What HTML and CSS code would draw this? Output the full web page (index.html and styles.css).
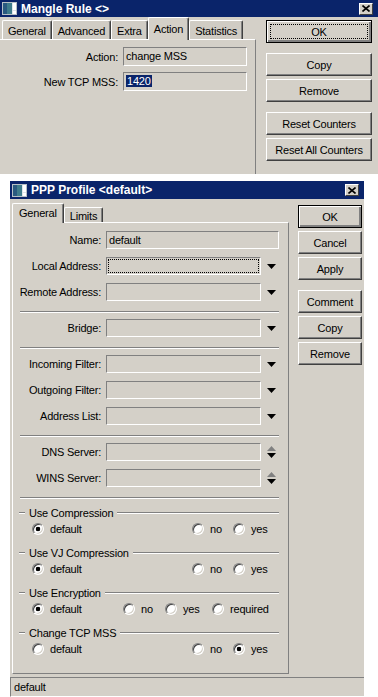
FILE: index.html
```html
<!DOCTYPE html>
<html lang="en">
<head>
  <meta charset="UTF-8" />
  <title>Mangle Rule / PPP Profile</title>
  <link rel="stylesheet" href="styles.css">
</head>
<body>
  <!-- Mangle Rule window -->
  <div class="window win-mangle">
    <div class="titlebar">
      <svg class="app-icon" width="16" height="13" viewBox="0 0 16 13">
        <rect x="0.5" y="0.5" width="14" height="12" fill="#dfe6ea" stroke="#b8c0c6"/>
        <rect x="1" y="1" width="9" height="11" fill="#3f7c8c"/>
        <rect x="1" y="1" width="4" height="11" fill="#2a5a80"/>
        <rect x="11" y="1" width="3" height="7" fill="#ffffff"/>
        <rect x="11" y="9" width="3" height="3" fill="#ffffff"/>
      </svg>
      <span class="title">Mangle Rule &lt;&gt;</span>
      <span class="close-btn">
        <svg width="8" height="7" viewBox="0 0 8 7"><path d="M0.5 0.5 L7.5 6.5 M7.5 0.5 L0.5 6.5" stroke="#000" stroke-width="1.6"/></svg>
      </span>
    </div>
    <div class="win-body">
      <div class="tab-area">
        <div class="tabs">
          <div class="tab">General</div>
          <div class="tab">Advanced</div>
          <div class="tab">Extra</div>
          <div class="tab active">Action</div>
          <div class="tab">Statistics</div>
        </div>
        <div class="tab-panel">
          <div class="form-row">
            <span class="label">Action:</span>
            <div class="field">change MSS</div>
          </div>
          <div class="form-row">
            <span class="label">New TCP MSS:</span>
            <div class="field"><span class="selected">1420</span></div>
          </div>
        </div>
      </div>
      <div class="side">
        <button class="btn default focused">OK</button>
        <button class="btn group-start">Copy</button>
        <button class="btn">Remove</button>
        <button class="btn group-start">Reset Counters</button>
        <button class="btn">Reset All Counters</button>
      </div>
    </div>
  </div>

  <!-- PPP Profile window -->
  <div class="window win-ppp">
    <div class="titlebar">
      <svg class="app-icon" width="16" height="13" viewBox="0 0 16 13">
        <rect x="0.5" y="0.5" width="14" height="12" fill="#dfe6ea" stroke="#b8c0c6"/>
        <rect x="1" y="1" width="9" height="11" fill="#3f7c8c"/>
        <rect x="1" y="1" width="4" height="11" fill="#2a5a80"/>
        <rect x="11" y="1" width="3" height="7" fill="#ffffff"/>
        <rect x="11" y="9" width="3" height="3" fill="#ffffff"/>
      </svg>
      <span class="title">PPP Profile &lt;default&gt;</span>
      <span class="close-btn">
        <svg width="8" height="7" viewBox="0 0 8 7"><path d="M0.5 0.5 L7.5 6.5 M7.5 0.5 L0.5 6.5" stroke="#000" stroke-width="1.6"/></svg>
      </span>
    </div>
    <div class="win-body">
      <div class="tab-area">
        <div class="tabs">
          <div class="tab active">General</div>
          <div class="tab">Limits</div>
        </div>
        <div class="tab-panel">
          <div class="form-row">
            <span class="label">Name:</span>
            <div class="field wide">default</div>
          </div>
          <div class="form-row">
            <span class="label">Local Address:</span>
            <div class="field focused"></div>
            <span class="drop"><svg width="9" height="5" viewBox="0 0 9 5"><polygon points="0,0 9,0 4.5,5" fill="#000"/></svg></span>
          </div>
          <div class="form-row">
            <span class="label">Remote Address:</span>
            <div class="field"></div>
            <span class="drop"><svg width="9" height="5" viewBox="0 0 9 5"><polygon points="0,0 9,0 4.5,5" fill="#000"/></svg></span>
          </div>
          <div class="sep"></div>
          <div class="form-row">
            <span class="label">Bridge:</span>
            <div class="field"></div>
            <span class="drop"><svg width="9" height="5" viewBox="0 0 9 5"><polygon points="0,0 9,0 4.5,5" fill="#000"/></svg></span>
          </div>
          <div class="sep"></div>
          <div class="form-row">
            <span class="label">Incoming Filter:</span>
            <div class="field"></div>
            <span class="drop"><svg width="9" height="5" viewBox="0 0 9 5"><polygon points="0,0 9,0 4.5,5" fill="#000"/></svg></span>
          </div>
          <div class="form-row">
            <span class="label">Outgoing Filter:</span>
            <div class="field"></div>
            <span class="drop"><svg width="9" height="5" viewBox="0 0 9 5"><polygon points="0,0 9,0 4.5,5" fill="#000"/></svg></span>
          </div>
          <div class="form-row">
            <span class="label">Address List:</span>
            <div class="field"></div>
            <span class="drop"><svg width="9" height="5" viewBox="0 0 9 5"><polygon points="0,0 9,0 4.5,5" fill="#000"/></svg></span>
          </div>
          <div class="sep"></div>
          <div class="form-row">
            <span class="label">DNS Server:</span>
            <div class="field"></div>
            <span class="drop"><svg width="9" height="12" viewBox="0 0 9 12"><polygon points="4.5,0 9,5 0,5" fill="#808080"/><polygon points="0,7 9,7 4.5,12" fill="#000"/></svg></span>
          </div>
          <div class="form-row">
            <span class="label">WINS Server:</span>
            <div class="field"></div>
            <span class="drop"><svg width="9" height="12" viewBox="0 0 9 12"><polygon points="4.5,0 9,5 0,5" fill="#808080"/><polygon points="0,7 9,7 4.5,12" fill="#000"/></svg></span>
          </div>
          <div class="sep"></div>

          <div class="group">
            <div class="group-title"><span>Use Compression</span></div>
            <div class="radio-row">
              <span class="radio checked">default</span>
              <span class="radio">no</span>
              <span class="radio">yes</span>
            </div>
          </div>
          <div class="group">
            <div class="group-title"><span>Use VJ Compression</span></div>
            <div class="radio-row">
              <span class="radio checked">default</span>
              <span class="radio">no</span>
              <span class="radio">yes</span>
            </div>
          </div>
          <div class="group">
            <div class="group-title"><span>Use Encryption</span></div>
            <div class="radio-row four">
              <span class="radio checked">default</span>
              <span class="radio">no</span>
              <span class="radio">yes</span>
              <span class="radio">required</span>
            </div>
          </div>
          <div class="group">
            <div class="group-title"><span>Change TCP MSS</span></div>
            <div class="radio-row">
              <span class="radio">default</span>
              <span class="radio">no</span>
              <span class="radio checked">yes</span>
            </div>
          </div>
        </div>
      </div>
      <div class="side">
        <button class="btn default">OK</button>
        <button class="btn">Cancel</button>
        <button class="btn">Apply</button>
        <button class="btn group-start">Comment</button>
        <button class="btn">Copy</button>
        <button class="btn">Remove</button>
      </div>
    </div>
    <div class="status">default</div>
  </div>
</body>
</html>
```

FILE: styles.css
```css
/* Global */
body {
  margin: 0;
  background: #fff;
  font-family: "Liberation Sans", Arial, sans-serif;
  font-size: 11px;
  letter-spacing: -0.2px;
  color: #000;
}
.window {
  background: #d4d0c8;
}
.win-mangle {
  width: 378px;
  height: 174px;
  overflow: hidden;
}
.win-ppp {
  width: 354px;
  margin: 7px 0 0 10px;
  height: 516px;
  overflow: hidden;
}

/* Title bar */
.titlebar {
  display: flex;
  align-items: center;
  background: #0a246a;
  color: #fff;
  font-weight: bold;
  font-size: 12px;
  letter-spacing: 0;
  padding: 0 3px 0 2px;
}
.win-mangle .titlebar {
  height: 17px;
}
.win-ppp .titlebar {
  height: 18px;
}
.app-icon {
  flex: none;
  margin-right: 3px;
}
.title {
  flex: 1;
  line-height: 14px;
}
.close-btn {
  display: flex;
  align-items: center;
  justify-content: center;
  width: 14px;
  height: 12px;
  box-sizing: border-box;
  background: #d4d0c8;
  border: 1px solid;
  border-color: #fff #404040 #404040 #fff;
  margin-right: 2px;
}

/* Window body */
.win-body {
  display: flex;
}
.win-ppp .win-body {
  padding-left: 2px;
}
.tab-area {
  flex: none;
}
.win-mangle .tab-area {
  width: 256px;
}
.win-ppp .tab-area {
  width: 277px;
}

/* Tabs */
.tabs {
  display: flex;
  align-items: flex-end;
}
.win-mangle .tabs {
  height: 22px;
  padding-left: 2px;
}
.win-ppp .tabs {
  height: 23px;
}
.tab {
  display: flex;
  align-items: center;
  box-sizing: border-box;
  padding: 1px 5px 0;
  background: #d0ccc4;
  border-top: 1px solid #fff;
  border-left: 1px solid #fff;
  border-right: 1px solid #404040;
  box-shadow: inset -1px 0 #808080;
  border-radius: 2px 2px 0 0;
}
.win-mangle .tab {
  height: 19px;
  padding: 2px 5px 0;
}
.win-ppp .tab {
  height: 15px;
}
.tab.active {
  position: relative;
  background: #d4d0c8;
  margin-bottom: -1px;
}
.win-mangle .tab.active {
  height: 23px;
  padding: 0 5px 1px;
}
.win-ppp .tab.active {
  height: 20px;
  padding: 0 6px 1px;
}

.tab-panel {
  display: flex;
  flex-direction: column;
  border-top: 1px solid #fff;
}
.win-mangle .tab-panel {
  height: 135px;
  border-right: 1px solid #808080;
  padding-top: 7px;
}
.win-ppp .tab-panel {
  border-left: 1px solid #fff;
  border-right: 1px solid #808080;
  border-bottom: 1px solid #808080;
  padding: 8px 9px 8px 0;
}

/* Form rows */
.form-row {
  display: grid;
  align-items: center;
}
.win-mangle .form-row {
  grid-template-columns: 118px 124px;
  column-gap: 5px;
  margin-bottom: 6px;
}
.win-ppp .form-row {
  grid-template-columns: 93px 155px 18px;
  margin-bottom: 8px;
}
.win-ppp .form-row .label {
  margin-right: 5px;
}
.win-ppp .form-row .drop {
  margin-left: 3px;
}
.label {
  text-align: right;
  white-space: nowrap;
}
.field {
  box-sizing: border-box;
  border: 1px solid;
  border-color: #808080 #fff #fff #808080;
  background: #d4d0c8;
  padding: 0 2px;
  white-space: nowrap;
}
.win-mangle .field {
  height: 19px;
  line-height: 17px;
}
.win-ppp .field {
  height: 18px;
  line-height: 16px;
}
.field.wide {
  grid-column: 2 / 4;
}
.field.focused {
  outline: 1px dotted #000;
  outline-offset: -3px;
}
.selected {
  background: #0a246a;
  color: #fff;
  padding: 0 1px;
}
.drop {
  display: flex;
  justify-content: center;
  align-items: center;
}

.sep {
  margin: 2px 0 6px 7px;
  border-top: 1px solid #808080;
  border-bottom: 1px solid #fff;
}

/* Radio groups */
.group {
  margin-bottom: 7px;
}
.group-title {
  display: flex;
  align-items: center;
  height: 15px;
  padding-left: 6px;
}
.group-title::before,
.group-title::after {
  content: "";
  border-top: 1px solid #808080;
  border-bottom: 1px solid #fff;
}
.group-title::before {
  width: 6px;
}
.group-title::after {
  flex: 1;
}
.group-title span {
  padding: 0 4px;
}
.radio-row {
  display: grid;
  grid-template-columns: 160px 41px auto;
  align-items: center;
  height: 18px;
  padding-left: 19px;
}
.radio-row.four {
  grid-template-columns: 91px 42px 47px auto;
}
.radio {
  display: flex;
  align-items: center;
}
.radio::before {
  content: "";
  flex: none;
  width: 12px;
  height: 12px;
  box-sizing: border-box;
  border-radius: 50%;
  background: #fff;
  border: 1px solid;
  border-color: #808080 #fff #fff #808080;
  box-shadow: inset 1px 1px #404040, inset -1px -1px #d4d0c8;
  margin-right: 6px;
}
.radio.checked::before {
  background: radial-gradient(circle, #000 0 2px, #fff 2.6px);
}

/* Buttons */
.side {
  flex: 1;
  display: flex;
  flex-direction: column;
}
.win-mangle .side {
  padding: 3px 6px 0 10px;
}
.win-ppp .side {
  padding: 6px 2px 0 9px;
}
.btn {
  display: block;
  box-sizing: border-box;
  width: 100%;
  height: 23px;
  margin-bottom: 3px;
  padding: 0;
  background: #d4d0c8;
  font: inherit;
  letter-spacing: inherit;
  color: #000;
  border: 1px solid;
  border-color: #fff #404040 #404040 #fff;
  box-shadow: inset -1px -1px #808080;
}
.btn.default {
  border-color: #000;
  box-shadow: inset 1px 1px #fff, inset -2px -2px #808080;
}
.btn.focused {
  outline: 1px dotted #000;
  outline-offset: -5px;
}
.btn.group-start {
  margin-top: 7px;
}

/* Status bar */
.status {
  margin-top: 3px;
  height: 20px;
  box-sizing: border-box;
  border-top: 1px solid #808080;
  border-left: 1px solid #808080;
  border-bottom: 1px solid #fff;
  padding-left: 3px;
  line-height: 18px;
}
```
